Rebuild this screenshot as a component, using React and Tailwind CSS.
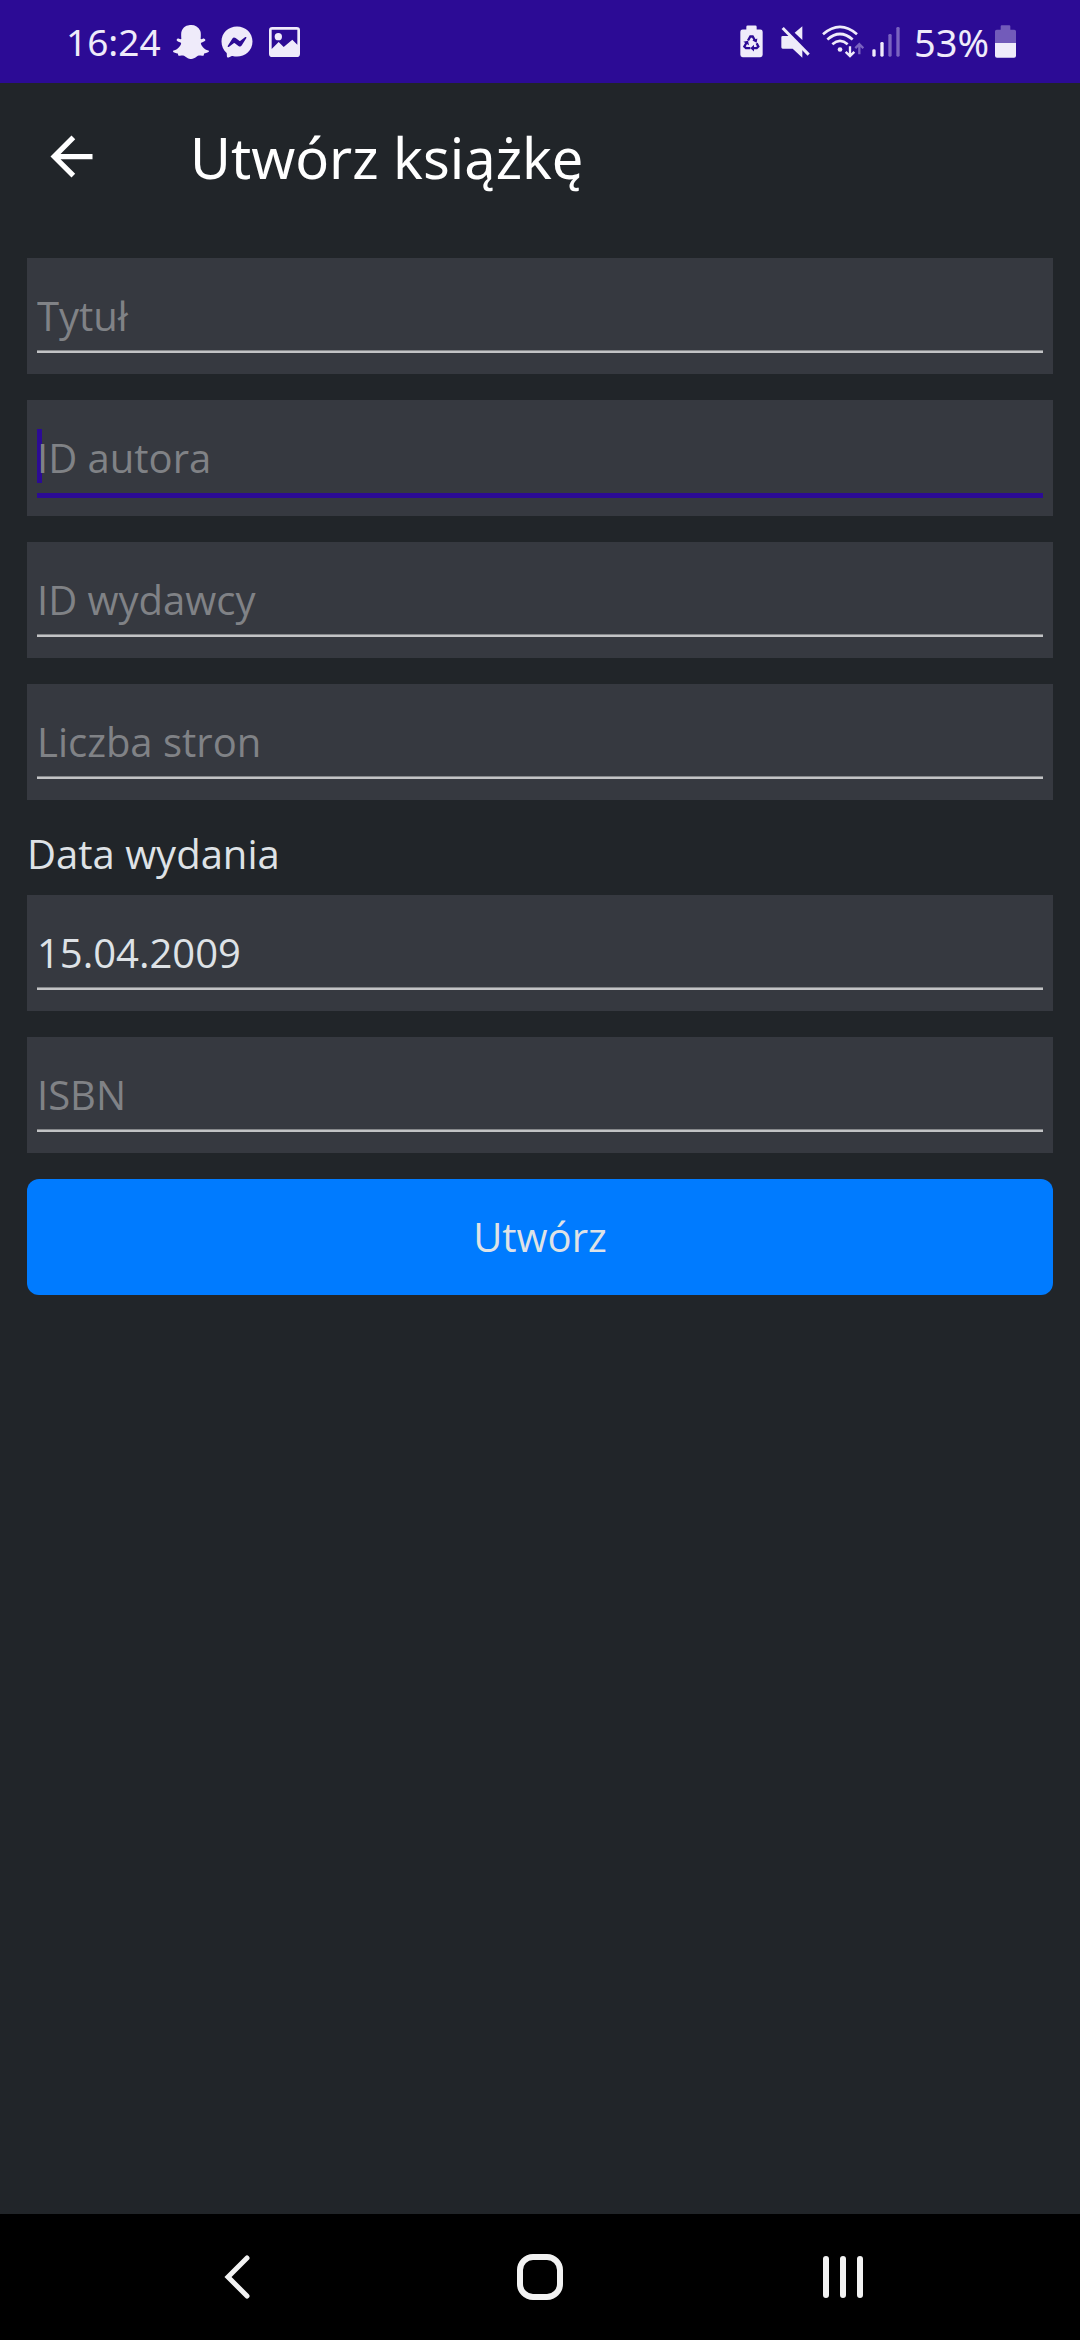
import React from "react";
import { FaSnapchatGhost, FaFacebookMessenger } from "react-icons/fa";
import { MdArrowBack } from "react-icons/md";

function PictureIcon() {
  return (
    <svg viewBox="0 0 93 90" className="h-[30px] w-[31px]" fill="currentColor" aria-hidden="true">
      <path
        fillRule="evenodd"
        d="M10 0H83Q93 0 93 10V80Q93 90 83 90H10Q0 90 0 80V10Q0 0 10 0ZM8 8V66L29 45L44 60L70 38L85 53V8Z"
      />
      <circle cx="28" cy="29" r="11" />
    </svg>
  );
}

function RecycleBatteryIcon() {
  return (
    <svg viewBox="0 0 69 98" className="h-[33px] w-[23px]" aria-hidden="true">
      <path
        fill="currentColor"
        d="M19 13V5Q19 1 23 1H46Q50 1 50 5V13H61Q68 13 68 20V89Q68 96 61 96H8Q1 96 1 89V20Q1 13 8 13Z"
      />
      <g fill="none" stroke="#2c0b95" strokeWidth="7">
        <path d="M24 46L31 34H38L45 46" />
        <path d="M50 54L55 64L50 69H38" />
        <path d="M31 69H18L13 64L20 52" />
      </g>
      <g fill="#2c0b95">
        <path d="M37 46L52 40L50 53Z" />
        <path d="M42 59V79L31 69Z" />
        <path d="M10 50L24 47L27 60Z" />
      </g>
    </svg>
  );
}

function MutedIcon() {
  return (
    <svg viewBox="0 0 87 96" className="h-8 w-[29px]" aria-hidden="true">
      <path fill="currentColor" d="M5 30H25L64 70V95L35 68H5Q1 68 1 64V34Q1 30 5 30ZM41 20L64 1V42Z" />
      <path fill="none" stroke="currentColor" strokeWidth="9" d="M5 6L83 86" />
    </svg>
  );
}

function WifiIcon() {
  return (
    <svg viewBox="0 0 126 98" className="h-[33px] w-[42px]" aria-hidden="true">
      <g fill="none" stroke="currentColor" strokeWidth="8">
        <path d="M3 27Q54 -17 105 27" />
        <path d="M16 43Q54 10 92 43" />
        <path d="M31 57Q54 37 77 57" />
      </g>
      <circle cx="54" cy="73" r="7" fill="currentColor" />
      <path fill="none" stroke="currentColor" strokeWidth="7" d="M84 63V92M71 80L84 93L97 80" />
      <path fill="none" stroke="#7a63c0" strokeWidth="7" d="M112 87V58M100 69L112 57L124 69" />
    </svg>
  );
}

function SignalIcon() {
  return (
    <svg viewBox="0 0 84 90" className="h-[30px] w-7" aria-hidden="true">
      <g fill="currentColor">
        <rect x="1" y="67" width="10" height="22" rx="4" />
        <rect x="25" y="45" width="10" height="44" rx="4" />
      </g>
      <g fill="#7a63c0">
        <rect x="49" y="21" width="10" height="68" rx="4" />
        <rect x="73" y="0" width="10" height="89" rx="4" />
      </g>
    </svg>
  );
}

function BatteryIcon() {
  return (
    <svg viewBox="0 0 63 99" className="h-[33px] w-[21px]" aria-hidden="true">
      <path fill="#725bba" d="M17 14V4Q17 1 20 1H43Q46 1 46 4V14H58Q63 14 63 19V54H0V19Q0 14 5 14Z" />
      <path fill="currentColor" d="M0 54H63V92Q63 98 57 98H6Q0 98 0 92Z" />
    </svg>
  );
}

function StatusBar() {
  return (
    <div className="flex h-[83px] items-center justify-between bg-[#2c0b95] pr-16 pl-[66px] font-['Noto_Sans',sans-serif] text-[37px] leading-none text-[#efebfa]">
      <div className="flex items-center">
        <span>16:24</span>
        <FaSnapchatGhost className="ml-3 size-9" aria-hidden="true" />
        <FaFacebookMessenger className="ml-3 size-8" aria-hidden="true" />
        <span className="ml-4">
          <PictureIcon />
        </span>
      </div>
      <div className="flex items-center">
        <RecycleBatteryIcon />
        <span className="ml-[18px]">
          <MutedIcon />
        </span>
        <span className="ml-3">
          <WifiIcon />
        </span>
        <span className="ml-2">
          <SignalIcon />
        </span>
        <span className="ml-3.5 text-[38px]">53%</span>
        <span className="ml-1.5">
          <BatteryIcon />
        </span>
      </div>
    </div>
  );
}

function Field({ id, label, value, focused = false, labelled = false }) {
  return (
    <div className="relative h-[116px] bg-[#363940] px-2.5 pt-7">
      {focused && <span className="absolute top-[29px] left-2.5 h-[54px] w-[5px] bg-[#2c0b95]" />}
      <input
        id={id}
        type="text"
        defaultValue={value}
        placeholder={labelled ? undefined : label}
        aria-label={labelled ? undefined : label}
        className={
          focused
            ? "relative block h-[70px] w-full border-b-5 border-[#2c0b95] bg-transparent pb-[7px] text-[40px] leading-[58px] text-[#dee2e6] caret-[#2c0b95] outline-none placeholder:text-[#808286]"
            : "relative block h-[67px] w-full border-b-2 border-[#c2c3c5] bg-transparent pb-[7px] text-[40px] leading-[58px] text-[#dee2e6] caret-[#2c0b95] shadow-[inset_0_-1px_#85878a] outline-none placeholder:text-[#808286]"
        }
      />
    </div>
  );
}

function NavBar() {
  return (
    <nav className="flex h-[126px] bg-black px-[86px] text-[#f2f2f2]">
      <button type="button" aria-label="Wstecz" className="flex flex-1 items-center justify-center">
        <svg viewBox="0 0 28 48" className="h-12 w-7" fill="none" stroke="currentColor" strokeWidth="5" strokeLinecap="round" aria-hidden="true">
          <path d="M24 5L5 24L24 43" />
        </svg>
      </button>
      <button type="button" aria-label="Ekran główny" className="flex flex-1 items-center justify-center">
        <svg viewBox="0 0 48 48" className="size-12" fill="none" stroke="currentColor" strokeWidth="6" aria-hidden="true">
          <rect x="4" y="4" width="40" height="40" rx="13" />
        </svg>
      </button>
      <button type="button" aria-label="Ostatnie" className="flex flex-1 items-center justify-center">
        <svg viewBox="0 0 42 48" className="h-12 w-[42px]" fill="none" stroke="currentColor" strokeWidth="6" strokeLinecap="round" aria-hidden="true">
          <path d="M4 6V42M21 6V42M38 6V42" />
        </svg>
      </button>
    </nav>
  );
}

export default function App() {
  return (
    <div className="flex min-h-screen flex-col bg-[#212529] font-['Open_Sans',sans-serif]">
      <StatusBar />
      <header className="flex h-[147px] items-center gap-[87px] pl-10 text-white">
        <button type="button" aria-label="Wróć">
          <MdArrowBack className="size-[63px]" aria-hidden="true" />
        </button>
        <h1 className="font-['Noto_Sans',sans-serif] text-[56px] leading-none">Utwórz książkę</h1>
      </header>
      <form className="flex grow flex-col px-[27px] pt-7" onSubmit={(e) => e.preventDefault()}>
        <div className="flex flex-col gap-[26px]">
          <Field id="title" label="Tytuł" />
          <Field id="author-id" label="ID autora" focused />
          <Field id="publisher-id" label="ID wydawcy" />
          <Field id="page-count" label="Liczba stron" />
        </div>
        <label htmlFor="release-date" className="flex h-[95px] items-center pt-3 text-[40px] leading-none text-[#dee2e6]">
          Data wydania
        </label>
        <div className="flex flex-col gap-[26px]">
          <Field id="release-date" label="Data wydania" labelled value="15.04.2009" />
          <Field id="isbn" label="ISBN" />
          <button type="submit" className="h-[116px] rounded-xl bg-[#007bff] text-[40px] text-[#dee2e6]">
            Utwórz
          </button>
        </div>
      </form>
      <NavBar />
    </div>
  );
}
